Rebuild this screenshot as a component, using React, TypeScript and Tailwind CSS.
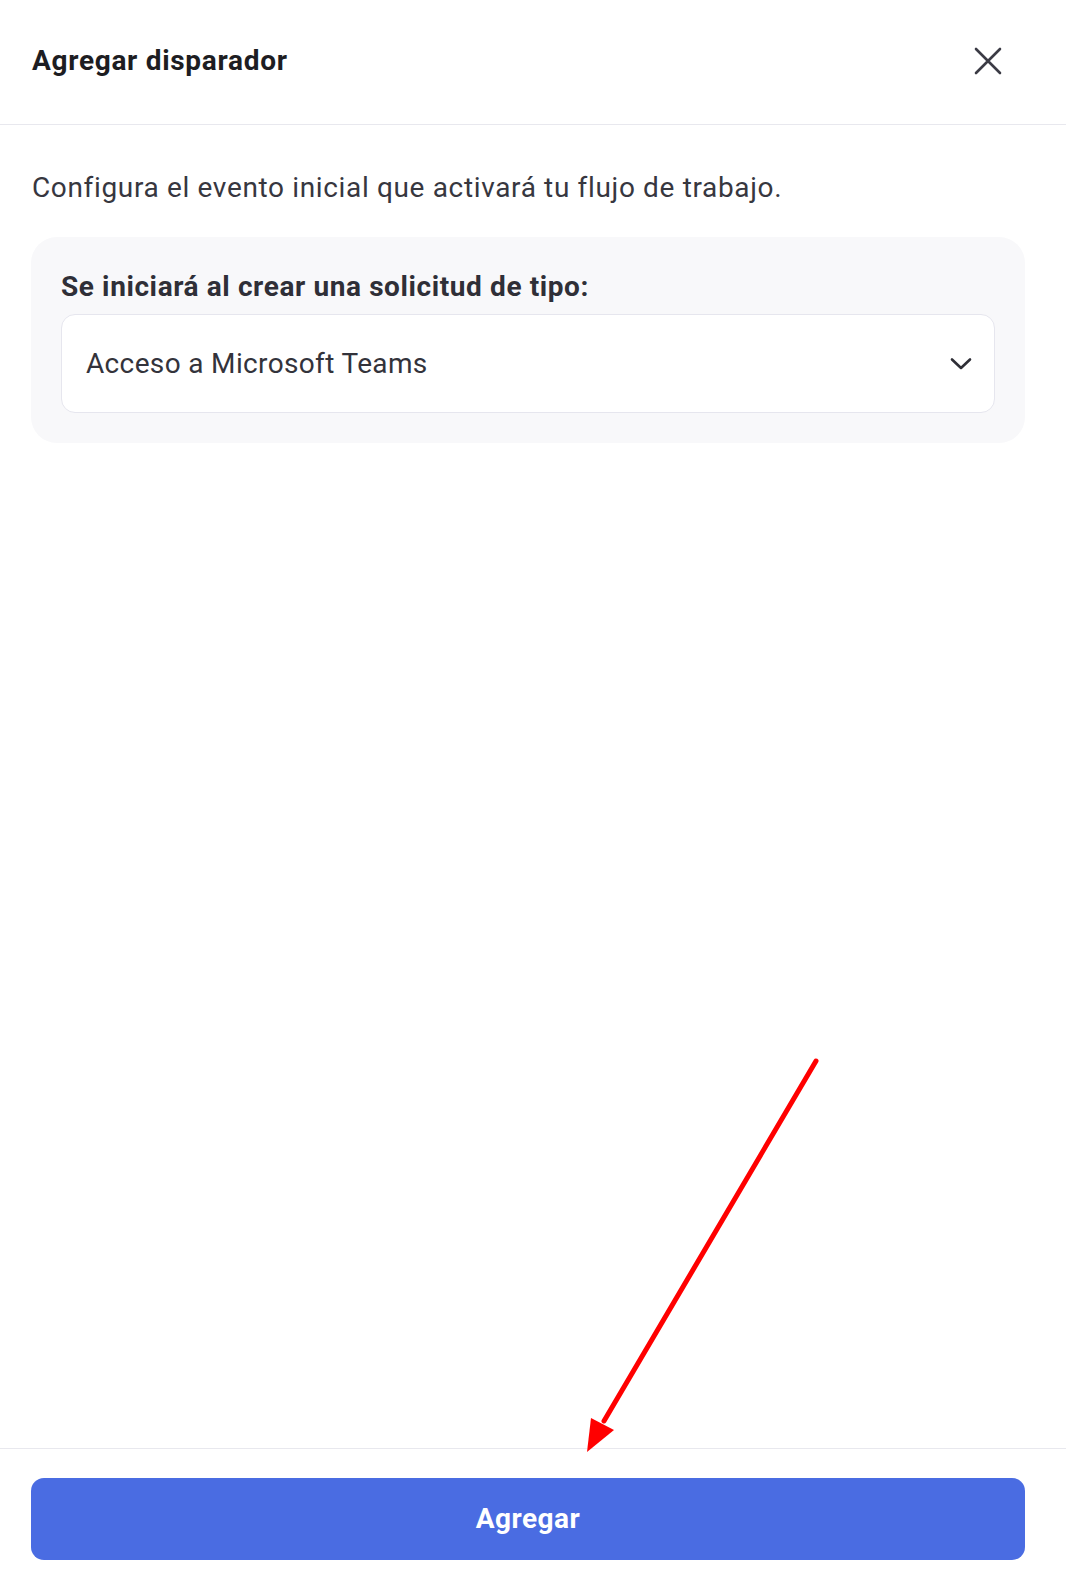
import React from 'react';

const CloseIcon = () => (
  <svg width="30" height="30" viewBox="0 0 30 30" fill="none" className="text-[#3b3b45]">
    <path d="M3 3L27 27M27 3L3 27" stroke="currentColor" strokeWidth="2.6" strokeLinecap="round" />
  </svg>
);

const ChevronDown = () => (
  <svg width="22" height="14" viewBox="0 0 22 14" fill="none" className="text-[#2e2e36]">
    <path d="M2 2.5L11 11L20 2.5" stroke="currentColor" strokeWidth="2.6" strokeLinecap="round" strokeLinejoin="round" />
  </svg>
);

const Arrow = () => (
  <svg className="pointer-events-none absolute left-0 top-0" width="1066" height="1588" viewBox="0 0 1066 1588">
    <line x1="816" y1="1061" x2="604" y2="1421" stroke="#ff0000" strokeWidth="5" strokeLinecap="round" />
    <polygon points="587,1452 591,1418 614,1430" fill="#ff0000" />
  </svg>
);

export default function App() {
  return (
    <div className="relative flex h-[1588px] w-[1066px] flex-col bg-white font-['Roboto',sans-serif]">
      <header className="flex h-[125px] shrink-0 items-center justify-between border-b border-[#e8e8ee] pb-[2px] pl-[32px] pr-[63px]">
        <h1 className="text-[28px] font-bold leading-none tracking-[0.7px] text-[#1d1d22]">Agregar disparador</h1>
        <button type="button" aria-label="Cerrar">
          <CloseIcon />
        </button>
      </header>

      <main className="flex-1 pl-[31px] pr-[41px] pt-[45px]">
        <p className="pl-px text-[28px] leading-[36px] tracking-[0.65px] text-[#37373f]">
          Configura el evento inicial que activará tu flujo de trabajo.
        </p>

        <section className="mt-[31px] rounded-[26px] bg-[#f8f8fa] px-[30px] pb-[30px] pt-[34px]">
          <label className="block text-[28px] font-bold leading-[32px] tracking-[0.6px] text-[#2f2f37]">
            Se iniciará al crear una solicitud de tipo:
          </label>
          <div className="mt-[11px] flex h-[99px] items-center justify-between rounded-[14px] border border-[#e6e6ee] bg-white pl-[24px] pr-[22px]">
            <span className="text-[28px] tracking-[0.35px] text-[#33333b]">Acceso a Microsoft Teams</span>
            <ChevronDown />
          </div>
        </section>
      </main>

      <footer className="shrink-0 border-t border-[#e8e8ee] pb-[28px] pl-[31px] pr-[41px] pt-[29px]">
        <button
          type="button"
          className="flex h-[82px] w-full items-center justify-center rounded-[13px] bg-[#4a6ce2] text-[28px] font-bold tracking-[0.5px] text-white"
        >
          Agregar
        </button>
      </footer>

      <Arrow />
    </div>
  );
}
